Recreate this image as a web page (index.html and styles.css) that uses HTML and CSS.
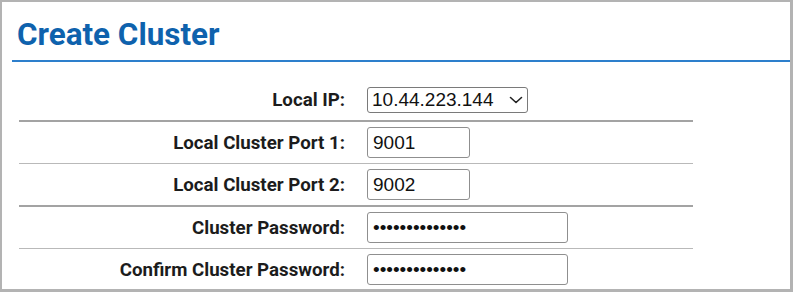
FILE: index.html
```html
<!DOCTYPE html>
<html>
<head>
<meta charset="utf-8">
<link rel="stylesheet" href="styles.css">
</head>
<body>
<div class="frame">
  <h1 class="title">Create Cluster</h1>
  <div class="rule"></div>
  <table class="form">
    <tr class="row dark">
      <td class="label">Local IP:</td>
      <td class="value">
        <span class="selwrap">
          <select class="sel"><option>10.44.223.144</option></select>
          <svg class="chev" width="14" height="8" viewBox="0 0 14 8"><path d="M1.5 1.5 L7 6.5 L12.5 1.5" fill="none" stroke="#222" stroke-width="1.6" stroke-linecap="round" stroke-linejoin="round"/></svg>
        </span>
      </td>
    </tr>
    <tr class="row light">
      <td class="label">Local Cluster Port 1:</td>
      <td class="value"><input class="port" type="text" value="9001"></td>
    </tr>
    <tr class="row dark">
      <td class="label">Local Cluster Port 2:</td>
      <td class="value"><input class="port" type="text" value="9002"></td>
    </tr>
    <tr class="row light">
      <td class="label">Cluster Password:</td>
      <td class="value"><input class="pass" type="password" value="abcdefghijklmn"></td>
    </tr>
    <tr class="row last">
      <td class="label">Confirm Cluster Password:</td>
      <td class="value"><input class="pass" type="password" value="abcdefghijklmn"></td>
    </tr>
  </table>
</div>
</body>
</html>
```

FILE: styles.css
```css
html, body {
  margin: 0;
  padding: 0;
  background: #ffffff;
}
.frame {
  width: 793px;
  height: 292px;
  box-sizing: border-box;
  border-style: solid;
  border-color: #b3b3b3;
  border-width: 2px 3px 3px 2px;
  padding-left: 10px;
  overflow: hidden;
}
.title {
  margin: 0;
  padding: 17px 0 0 5px;
  height: 41px;
  box-sizing: border-box;
  font-family: Roboto, "Liberation Sans", sans-serif;
  font-weight: 700;
  font-size: 31.4px;
  line-height: 32px;
  color: #0e62ad;
}
.rule {
  margin-top: 17px;
  height: 2px;
  background: #2d7fcc;
}
.form {
  margin: 17px 0 0 7px;
  width: 674px;
  border-collapse: collapse;
  border-spacing: 0;
}
.row td {
  height: 41px;
  padding: 0;
  vertical-align: middle;
}
.row.dark td { border-bottom: 2px solid #a3a3a3; }
.row.light td { border-bottom: 1px solid #b9b9b9; }
.row.last td { border-bottom: 2px solid #e8e8e8; }
.label {
  width: 326px;
  padding-right: 10px !important;
  text-align: right;
  font-family: Roboto, "Liberation Sans", sans-serif;
  font-weight: 700;
  font-size: 18.7px;
  color: #1c1c1c;
}
.value {
  padding-left: 12px !important;
}
.selwrap {
  position: relative;
  display: block;
  width: 161px;
}
.sel {
  -webkit-appearance: none;
  appearance: none;
  width: 161px;
  height: 26px;
  box-sizing: border-box;
  border: 1px solid #7a7a7a;
  border-radius: 3px;
  background: #ffffff;
  font-family: "Liberation Sans", Arial, sans-serif;
  font-size: 19px;
  color: #111;
  padding: 0 0 0 4px;
  display: block;
}
.chev {
  position: absolute;
  right: 5px;
  top: 9px;
  pointer-events: none;
}
.port, .pass {
  display: block;
  height: 31px;
  box-sizing: border-box;
  border: 1px solid #8f8f8f;
  border-radius: 3px;
  padding: 0 5px;
  font-family: "Liberation Sans", Arial, sans-serif;
  font-size: 19px;
  color: #111;
  background: #fff;
}
.port { width: 103px; }
.pass { width: 201px; }
```
